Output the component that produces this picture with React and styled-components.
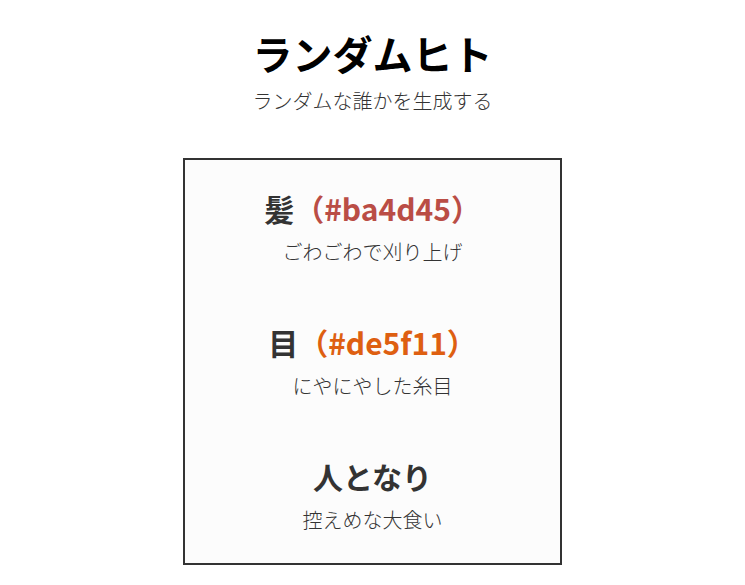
import React from 'react'
import styled, { createGlobalStyle } from 'styled-components'

const GlobalStyle = createGlobalStyle`
  body {
    margin: 0;
    background: #fff;
    font-family: "Noto Sans CJK JP", "Noto Sans", sans-serif;
    color: #333;
  }
`

const traits = [
  { label: '髪', color: '#ba4d45', text: 'ごわごわで刈り上げ' },
  { label: '目', color: '#de5f11', text: 'にやにやした糸目' },
  { label: '人となり', text: '控えめな大食い' },
]

const App = () => {
  return (
    <Page>
      <GlobalStyle />
      <Header>
        <Title>ランダムヒト</Title>
        <Lead>ランダムな誰かを生成する</Lead>
      </Header>
      <Card>
        {traits.map((t) => (
          <Trait key={t.label}>
            <TraitName>
              {t.label}
              {t.color && <Code $color={t.color}>（{t.color}）</Code>}
            </TraitName>
            <TraitText>{t.text}</TraitText>
          </Trait>
        ))}
      </Card>
    </Page>
  )
}

export default App

const Page = styled.div`
  display: flex;
  flex-direction: column;
  align-items: center;
  padding-top: 29px;
`

const Header = styled.header`
  display: flex;
  flex-direction: column;
  align-items: center;
  gap: 9px;
  margin-bottom: 42px;
`

const Title = styled.h1`
  margin: 0;
  font-size: 40px;
  line-height: 48px;
  font-weight: 700;
  color: #000;
`

const Lead = styled.p`
  margin: 0;
  font-size: 20px;
  line-height: 30px;
  font-weight: 300;
  color: #333;
`

const Card = styled.section`
  box-sizing: border-box;
  width: 379px;
  border: 2px solid #333;
  background: #fcfcfc;
  display: flex;
  flex-direction: column;
  align-items: center;
  gap: 56px;
  padding: 29px 0 28px;
`

const Trait = styled.div`
  display: flex;
  flex-direction: column;
  align-items: center;
  gap: 9px;
`

const TraitName = styled.h2`
  margin: 0;
  font-size: 30px;
  line-height: 39px;
  font-weight: 700;
  color: #333;
`

const Code = styled.span`
  color: ${(p) => p.$color};
`

const TraitText = styled.p`
  margin: 0;
  font-size: 20px;
  line-height: 30px;
  font-weight: 300;
  color: #333;
`
